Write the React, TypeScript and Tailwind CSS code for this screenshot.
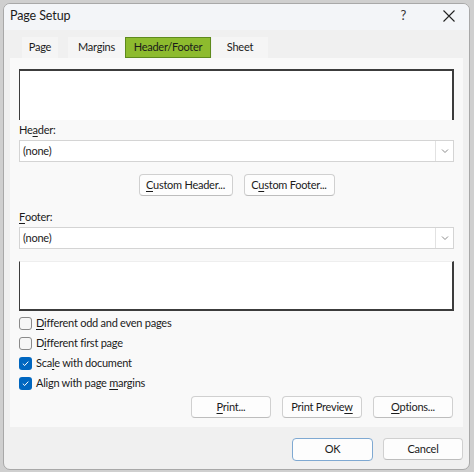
import React from "react";

const U = ({ children }: { children: React.ReactNode }) => (
  <span className="underline underline-offset-2 decoration-[1px]">{children}</span>
);

const Btn = ({ w, children, def }: { w: string; children: React.ReactNode; def?: boolean }) => (
  <div
    className={`${w} h-[22px] flex items-center justify-center rounded-[4px] border bg-[#fdfdfd] ${
      def ? "border-[#7fa9d2] h-[23px]" : "border-[#d0d0d0] border-b-[#bdbdbd]"
    }`}
  >
    {children}
  </div>
);

const Check = ({ checked }: { checked?: boolean }) =>
  checked ? (
    <div className="w-[13px] h-[13px] rounded-[3px] bg-[#0067c0] flex items-center justify-center">
      <svg width="9" height="9" viewBox="0 0 9 9">
        <path d="M1.8 4.7 L3.7 6.5 L7.3 2.6" fill="none" stroke="#fff" strokeWidth="1" />
      </svg>
    </div>
  ) : (
    <div className="w-[13px] h-[13px] rounded-[3px] border border-[#8a8a8a] bg-[#f6f6f6]" />
  );

const Select = () => (
  <div className="h-[22px] flex bg-white border border-[#d4d4d4]">
    <div className="flex-1 flex items-center pl-[3px]">(none)</div>
    <div className="w-[18px] border-l border-[#e2e2e2] flex items-center justify-center">
      <svg width="8" height="6" viewBox="0 0 8 6">
        <path d="M1 1.5 L4 4.5 L7 1.5" fill="none" stroke="#8a8a8a" strokeWidth="1" />
      </svg>
    </div>
  </div>
);

export default function App() {
  return (
    <div
      className="w-[474px] h-[472px] bg-[#cfcfcf] pt-[3px] pl-[3px] text-[#1b1b1b]"
      style={{ fontFamily: "Lato, 'Noto Sans', sans-serif" }}
    >
      <div className="w-[467px] h-[467px] rounded-[7px] border border-[#a8a8a8] bg-[#f0f0f0] overflow-hidden flex flex-col text-[11px] tracking-[-0.25px]">
        {/* title bar */}
        <div className="h-[26px] shrink-0 bg-[#f3f5f8] flex items-center pb-[2px]">
          <div className="pl-[6px] text-[12.5px] tracking-[-0.1px] flex-1">Page Setup</div>
          <div className="text-[13px] mr-[37px] text-[#333]">?</div>
          <div className="mr-[14px]">
            <svg width="12" height="12" viewBox="0 0 12 12">
              <path d="M0.5 0.5 L11.5 11.5 M11.5 0.5 L0.5 11.5" stroke="#222" strokeWidth="1.1" />
            </svg>
          </div>
        </div>
        {/* tabs */}
        <div className="h-[28px] shrink-0 flex items-end pl-[18px]">
          <div className="w-[36px] h-[21px] flex items-center justify-center bg-[#f5f5f5]">Page</div>
          <div className="w-[57px] h-[21px] ml-[10px] flex items-center justify-center bg-[#f5f5f5]">Margins</div>
          <div className="w-[86px] h-[21px] flex items-center justify-center bg-[#8dbb2e] border border-[#5e8a1c]">
            Header/Footer
          </div>
          <div className="w-[56px] h-[21px] ml-[1px] flex items-center justify-center bg-[#f5f5f5]">Sheet</div>
        </div>
        {/* panel */}
        <div className="ml-[6px] w-[453px] h-[369px] shrink-0 bg-[#f9f9f9] px-[9px] pt-[11px] flex flex-col">
          <div className="h-[51px] bg-white border-t-2 border-l border-r-2 border-[#3c3c3c]" />
          <div className="h-[20px] flex items-center">
            He<U>a</U>der:
          </div>
          <Select />
          <div className="mt-[12px] flex justify-center gap-[11px]">
            <Btn w="w-[94px]">
              <span>
                <U>C</U>ustom Header...
              </span>
            </Btn>
            <Btn w="w-[91px]">
              <span>
                C<U>u</U>stom Footer...
              </span>
            </Btn>
          </div>
          <div className="mt-[11px] h-[20px] flex items-center">
            <U>F</U>ooter:
          </div>
          <Select />
          <div className="mt-[12px] h-[50px] bg-white border-b-2 border-l border-r-2 border-[#3c3c3c] border-t border-t-[#eeeeee]" />
          <div className="mt-[2px] flex flex-col">
            <div className="h-[20px] flex items-center gap-[4px]">
              <Check />
              <span>
                <U>D</U>ifferent odd and even pages
              </span>
            </div>
            <div className="h-[20px] flex items-center gap-[4px]">
              <Check />
              <span>
                D<U>i</U>fferent first page
              </span>
            </div>
            <div className="h-[20px] flex items-center gap-[4px]">
              <Check checked />
              <span>
                Sca<U>l</U>e with document
              </span>
            </div>
            <div className="h-[20px] flex items-center gap-[4px]">
              <Check checked />
              <span>
                Align with page <U>m</U>argins
              </span>
            </div>
          </div>
          <div className="mt-[3px] flex justify-end gap-[11px] pr-[1px]">
            <Btn w="w-[80px]">
              <span>
                <U>P</U>rint...
              </span>
            </Btn>
            <Btn w="w-[80px]">
              <span>
                Print Previe<U>w</U>
              </span>
            </Btn>
            <Btn w="w-[80px]">
              <span>
                <U>O</U>ptions...
              </span>
            </Btn>
          </div>
        </div>
        {/* bottom */}
        <div className="flex-1 flex justify-end items-start pt-[11px] pr-[6px] gap-[10px]">
          <Btn w="w-[81px]" def>
            OK
          </Btn>
          <Btn w="w-[80px]">Cancel</Btn>
        </div>
      </div>
    </div>
  );
}
